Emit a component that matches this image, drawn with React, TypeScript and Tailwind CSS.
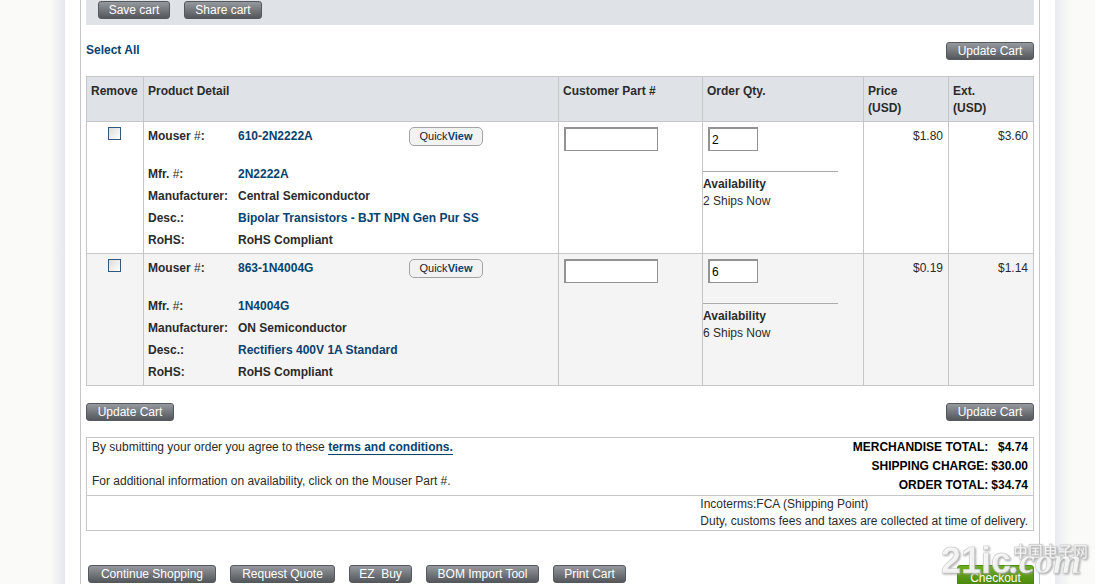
import { useState } from "react";
import clsx from "clsx";

interface CartItem {
    mouserNo: string;
    mfrNo: string;
    manufacturer: string;
    description: string;
    rohs: string;
    qty: string;
    price: string;
    ext: string;
}

const items: CartItem[] = [
    {
        mouserNo: "610-2N2222A",
        mfrNo: "2N2222A",
        manufacturer: "Central Semiconductor",
        description: "Bipolar Transistors - BJT NPN Gen Pur SS",
        rohs: "RoHS Compliant",
        qty: "2",
        price: "$1.80",
        ext: "$3.60",
    },
    {
        mouserNo: "863-1N4004G",
        mfrNo: "1N4004G",
        manufacturer: "ON Semiconductor",
        description: "Rectifiers 400V 1A Standard",
        rohs: "RoHS Compliant",
        qty: "6",
        price: "$0.19",
        ext: "$1.14",
    },
];

const totals = [
    { label: "MERCHANDISE TOTAL:", value: "$4.74" },
    { label: "SHIPPING CHARGE:", value: "$30.00" },
    { label: "ORDER TOTAL:", value: "$34.74" },
];

function CartButton({ children, className }: { children: string; className?: string }) {
    return (
        <button
            type="button"
            className={clsx(
                "h-[18px] shrink-0 whitespace-pre rounded-[3px] border border-[#55585c] bg-linear-to-b from-[#96999e] to-[#54575c] text-center text-xs leading-[17px] text-white",
                className
            )}
        >
            {children}
        </button>
    );
}

function CartRow({ item, shaded }: { item: CartItem; shaded: boolean }) {
    const [qty, setQty] = useState(item.qty);
    const cell = "border border-[#c6c6c6] align-top";
    const link = "text-[#06436f] hover:underline";

    return (
        <tr className={shaded ? "bg-[#f4f4f4]" : "bg-white"}>
            <td className={clsx(cell, "pt-[5px] pr-[2px]")}>
                <input
                    type="checkbox"
                    aria-label={`Remove ${item.mouserNo}`}
                    className="mx-auto block size-[13px] appearance-none border border-[#31577c] bg-linear-to-br from-[#dcdcd8] to-white checked:bg-[#31577c]"
                />
            </td>
            <td className={clsx(cell, "px-1 pt-[5px] pb-[2px] font-bold")}>
                <dl className="grid grid-cols-[90px_1fr] leading-[22px]">
                    <dt className="h-9 leading-[18px]">
                        Mouser <span className="font-normal">#</span>:
                    </dt>
                    <dd className="flex h-9 items-start leading-[18px]">
                        <a href="#" className={clsx(link, "w-[171px]")}>{item.mouserNo}</a>
                        <button
                            type="button"
                            className="h-[19px] w-[74px] rounded-[5px] border border-[#a3a3a3] bg-[#f2f2f2] text-[11px] leading-[17px] font-normal text-[#222]"
                        >
                            Quick<b className="text-[#06436f]">View</b>
                        </button>
                    </dd>
                    <dt>
                        Mfr. <span className="font-normal">#</span>:
                    </dt>
                    <dd><a href="#" className={link}>{item.mfrNo}</a></dd>
                    <dt>Manufacturer:</dt>
                    <dd>{item.manufacturer}</dd>
                    <dt>Desc.:</dt>
                    <dd><a href="#" className={link}>{item.description}</a></dd>
                    <dt>RoHS:</dt>
                    <dd>{item.rohs}</dd>
                </dl>
            </td>
            <td className={clsx(cell, "px-[5px] pt-[5px]")}>
                <input
                    type="text"
                    aria-label={`Customer part number for ${item.mouserNo}`}
                    className="block h-6 w-[94px] border border-t-2 border-l-2 border-[#929292] bg-white px-1"
                />
            </td>
            <td className={clsx(cell, "pt-[5px]")}>
                <input
                    type="text"
                    aria-label={`Order quantity for ${item.mouserNo}`}
                    value={qty}
                    onChange={(e) => setQty(e.target.value)}
                    className="mb-5 ml-[5px] block h-6 w-[50px] border border-t-2 border-l-2 border-[#929292] bg-white px-[2px] text-black"
                />
                <div className="w-[135px] border-t border-[#aaa] pt-1">
                    <p className="font-bold">Availability</p>
                    <p>{item.qty} Ships Now</p>
                </div>
            </td>
            <td className={clsx(cell, "px-[5px] pt-1.5 text-right")}>{item.price}</td>
            <td className={clsx(cell, "px-[5px] pt-1.5 text-right")}>{item.ext}</td>
        </tr>
    );
}

function SiteMark() {
    return (
        <div className="pointer-events-none absolute top-[536px] right-[6px] h-12 w-[148px]" aria-hidden="true">
            <svg
                viewBox="0 0 148 48"
                className="size-full overflow-visible text-white/85 drop-shadow-[1px_1px_1px_#999]"
                fill="currentColor"
                stroke="#c9c9c9"
                strokeWidth="0.6"
            >
                <text x="0" y="37" fontSize="36" fontWeight="bold" fontFamily="Liberation Sans, sans-serif">21ic</text>
                <text x="72" y="21" fontSize="15" fontWeight="bold" fontFamily="Noto Sans CJK SC, sans-serif">中国电子网</text>
                <text x="69" y="37" fontSize="36" fontWeight="bold" fontStyle="italic" fontFamily="Liberation Serif, serif">.com</text>
            </svg>
        </div>
    );
}

export default function App() {
    const head = "border border-[#c6c6c6] px-1 pt-1.5 pb-1 text-left align-top font-bold";

    return (
        <div className="relative flex min-h-screen overflow-hidden bg-[#fafaf8] font-['Liberation_Sans',Arial,sans-serif] text-xs leading-[17px] text-[#2b2b2b]">
            <div className="ml-[50px] w-[15px] shrink-0 bg-linear-to-r from-[#fafaf8] to-[#e6e7ed]" />
            <div className="min-w-0 flex-1 bg-white px-[15px]">
                <main className="min-h-screen border-x border-[#c6c6c6] px-[5px]">
                    <div className="flex h-[25px] items-start gap-[14px] bg-[#dfe2e7] px-3 pt-px">
                        <CartButton className="w-[72px]">Save cart</CartButton>
                        <CartButton className="w-[78px]">Share cart</CartButton>
                    </div>

                    <div className="flex h-[51px] items-start justify-between pt-[17px]">
                        <a href="#" className="font-bold text-[#06436f]">Select All</a>
                        <CartButton className="w-[88px]">Update Cart</CartButton>
                    </div>

                    <table className="w-full table-fixed border-collapse">
                        <colgroup>
                            <col className="w-[57px]" />
                            <col />
                            <col className="w-[144px]" />
                            <col className="w-[161px]" />
                            <col className="w-[85px]" />
                            <col className="w-[85px]" />
                        </colgroup>
                        <thead>
                            <tr className="bg-[#dfe2e7]">
                                <th className={clsx(head, "whitespace-nowrap")}>Remove</th>
                                <th className={head}>Product Detail</th>
                                <th className={head}>Customer Part #</th>
                                <th className={head}>Order Qty.</th>
                                <th className={head}>Price<br />(USD)</th>
                                <th className={head}>Ext.<br />(USD)</th>
                            </tr>
                        </thead>
                        <tbody>
                            {items.map((item, i) => (
                                <CartRow key={item.mouserNo} item={item} shaded={i % 2 === 1} />
                            ))}
                        </tbody>
                    </table>

                    <div className="flex justify-between pt-[17px] pb-4">
                        <CartButton className="w-[88px]">Update Cart</CartButton>
                        <CartButton className="w-[88px]">Update Cart</CartButton>
                    </div>

                    <section className="border border-[#c6c6c6]">
                        <div className="flex h-[58px] justify-between border-b border-[#c6c6c6] px-[5px]">
                            <div className="pt-px">
                                <p>
                                    By submitting your order you agree to these{" "}
                                    <a href="#" className="border-b border-[#06436f] font-bold text-[#06436f]">terms and conditions.</a>
                                </p>
                                <p className="mt-[17px]">
                                    For additional information on availability, click on the Mouser Part #.
                                </p>
                            </div>
                            <table className="text-right leading-[19px] font-bold text-black">
                                <tbody>
                                    {totals.map((row) => (
                                        <tr key={row.label}>
                                            <th className="text-right">{row.label}</th>
                                            <td className="pl-[3px]">{row.value}</td>
                                        </tr>
                                    ))}
                                </tbody>
                            </table>
                        </div>
                        <div className="flex h-[34px] justify-end px-[5px]">
                            <p>
                                Incoterms:FCA (Shipping Point)
                                <br />
                                Duty, customs fees and taxes are collected at time of delivery.
                            </p>
                        </div>
                    </section>

                    <div className="mt-[34px] flex items-start gap-[14px] pl-0.5">
                        <CartButton className="w-32">Continue Shopping</CartButton>
                        <CartButton className="w-[105px]">Request Quote</CartButton>
                        <CartButton className="w-[63px]">EZ  Buy</CartButton>
                        <CartButton className="w-[113px]">BOM Import Tool</CartButton>
                        <CartButton className="w-[73px]">Print Cart</CartButton>
                        <button
                            type="button"
                            className="ml-auto h-6 w-[77px] rounded-[3px] border border-[#4b8a0c] bg-linear-to-b from-[#6fae20] to-[#438007] text-center leading-6 text-white"
                        >
                            Checkout
                        </button>
                    </div>
                </main>
            </div>
            <div className="mr-[25px] w-[15px] shrink-0 bg-linear-to-r from-[#e8ebf0] to-[#fafaf8]" />
            <SiteMark />
        </div>
    );
}
